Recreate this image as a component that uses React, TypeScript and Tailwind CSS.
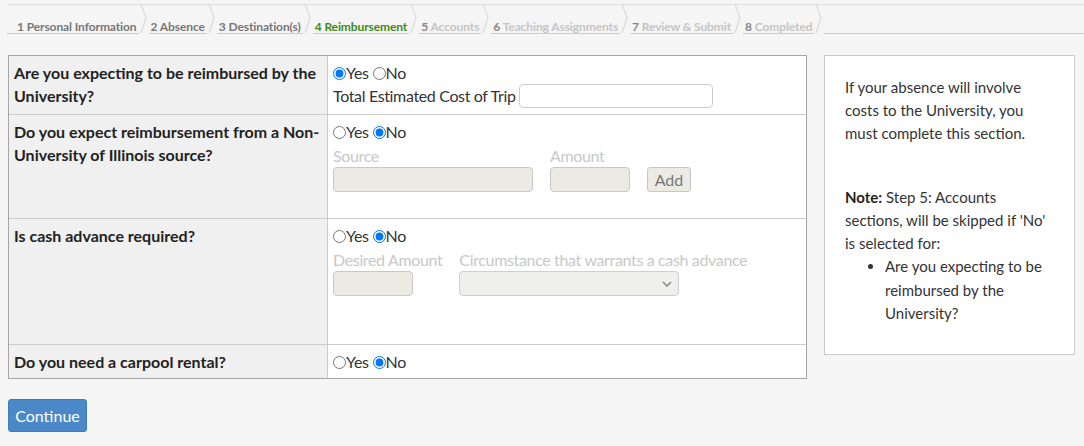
import React from "react";

const steps: { n: string; label: string; state: "done" | "active" | "todo" }[] = [
  { n: "1", label: "Personal Information", state: "done" },
  { n: "2", label: "Absence", state: "done" },
  { n: "3", label: "Destination(s)", state: "done" },
  { n: "4", label: "Reimbursement", state: "active" },
  { n: "5", label: "Accounts", state: "todo" },
  { n: "6", label: "Teaching Assignments", state: "todo" },
  { n: "7", label: "Review & Submit", state: "todo" },
  { n: "8", label: "Completed", state: "todo" },
];

function Chevron() {
  return (
    <svg className="h-[30px] w-[10px] -mt-px shrink-0" viewBox="0 0 10 30" fill="none">
      <polyline points="2,0 7,14 2,29" stroke="#d4d4d4" strokeWidth="1" />
    </svg>
  );
}

function Radio({ yes }: { yes: boolean }) {
  return (
    <div className="leading-[23px] text-[#333] tracking-[-0.3px]">
      <input type="radio" checked={yes} readOnly className="m-0 h-[13px] w-[13px] align-[-1px]" />
      Yes{" "}
      <input type="radio" checked={!yes} readOnly className="m-0 h-[13px] w-[13px] align-[-1px]" />
      No
    </div>
  );
}

function Field({ label, children }: { label: string; children: React.ReactNode }) {
  return (
    <div className="flex flex-col">
      <div className="mt-px leading-[23px] tracking-[-0.35px] text-[#c8c8c8]">{label}</div>
      {children}
    </div>
  );
}

function Row({
  label,
  h,
  first,
  children,
}: {
  label: React.ReactNode;
  h: string;
  first?: boolean;
  children: React.ReactNode;
}) {
  return (
    <div className={`flex ${h} ${first ? "" : "border-t border-[#cccccc]"}`}>
      <div className="w-[319px] shrink-0 border-r border-[#cccccc] bg-[#f0f0f0] pl-[5px] pr-[6px] pt-[5px] text-[16px] font-bold leading-[23px] text-[#222]">
        {label}
      </div>
      <div className="flex-1 bg-white pl-[5px] pt-[5px]">{children}</div>
    </div>
  );
}

export default function App() {
  return (
    <div className="min-h-screen bg-[#f5f5f5] font-['Lato',sans-serif] text-[16px] text-[#222]">
      <nav className="ml-[7px] pt-[4px]">
        <div className="flex h-[30px] border-t border-[#dddddd]">
          {steps.map((s, i) => (
            <React.Fragment key={s.n}>
              <div className="flex items-end">
                <span
                  className={`border-b border-[#cccccc] pb-0 pr-[2px] text-[12px] font-bold leading-[13px] tracking-[-0.1px] ${
                    i === 0 ? "pl-[10px]" : "pl-[2px]"
                  } ${
                    s.state === "active"
                      ? "text-[#3c8a17]"
                      : s.state === "done"
                      ? "text-[#777777]"
                      : "text-[#c4c4c4]"
                  }`}
                >
                  <span className={s.state === "todo" ? "text-[#888888]" : ""}>{s.n}</span> {s.label}
                </span>
              </div>
              <Chevron />
            </React.Fragment>
          ))}
          <div className="flex-1 border-b border-[#cccccc]" />
        </div>
      </nav>

      <div className="mt-[21px] flex items-start gap-[17px] pl-[8px]">
        <div className="w-[799px] border border-[#a6a6a6]">
          <Row first h="h-[58px]" label={<>Are you expecting to be reimbursed by the University?</>}>
            <Radio yes />
            <div className="flex items-center leading-[24px] tracking-[-0.35px] text-[#333]">
              Total Estimated Cost of Trip
              <input
                type="text"
                readOnly
                className="ml-[3px] h-[24px] w-[194px] rounded-[4px] border border-[#cccccc] bg-white"
              />
            </div>
          </Row>
          <Row h="h-[104px]" label={<>Do you expect reimbursement from a Non-University of Illinois source?</>}>
            <Radio yes={false} />
            <div className="flex items-end gap-[17px]">
              <Field label="Source">
                <input disabled className="h-[25px] w-[200px] rounded-[4px] border border-[#c8c8c8] bg-[#ebebe4]" />
              </Field>
              <Field label="Amount">
                <input disabled className="h-[25px] w-[80px] rounded-[4px] border border-[#c8c8c8] bg-[#ebebe4]" />
              </Field>
              <button
                disabled
                className="h-[25px] w-[44px] rounded-[3px] border border-[#c8c8c8] bg-[#ebebe4] text-[16px] leading-[23px] text-[#777]"
              >
                Add
              </button>
            </div>
          </Row>
          <Row h="h-[126px]" label={<>Is cash advance required?</>}>
            <Radio yes={false} />
            <div className="flex items-end gap-[17px]">
              <Field label="Desired Amount">
                <input disabled className="h-[25px] w-[80px] rounded-[4px] border border-[#c8c8c8] bg-[#ebebe4]" />
              </Field>
              <Field label="Circumstance that warrants a cash advance">
                <div className="flex h-[25px] w-[220px] items-center justify-end rounded-[4px] border border-[#cfcfcf] bg-[#efefeb] pr-[6px]">
                  <svg width="10" height="6" viewBox="0 0 10 6" fill="none">
                    <polyline points="1,1 5,5 9,1" stroke="#8a8a8a" strokeWidth="1.6" />
                  </svg>
                </div>
              </Field>
            </div>
          </Row>
          <Row h="h-[34px]" label={<>Do you need a carpool rental?</>}>
            <Radio yes={false} />
          </Row>
        </div>

        <aside className="h-[300px] w-[251px] border border-[#cccccc] bg-white px-[20px] pt-[20px] text-[15px] leading-[23px] text-[#333]">
          <p className="whitespace-nowrap">
            If your absence will involve
            <br />
            costs to the University, you
            <br />
            must complete this section.
          </p>
          <p className="mt-[41px] whitespace-nowrap">
            <b className="text-[#222]">Note:</b> Step 5: Accounts
            <br />
            sections, will be skipped if 'No'
            <br />
            is selected for:
          </p>
          <ul className="list-disc pl-[40px] leading-[23.5px]">
            <li className="whitespace-nowrap">
              Are you expecting to be
              <br />
              reimbursed by the
              <br />
              University?
            </li>
          </ul>
        </aside>
      </div>

      <button className="ml-[8px] mt-[20px] h-[33px] w-[79px] rounded-[3px] border border-[#3f7cbc] bg-[#4a88c8] text-[16px] text-white">
        Continue
      </button>
    </div>
  );
}
